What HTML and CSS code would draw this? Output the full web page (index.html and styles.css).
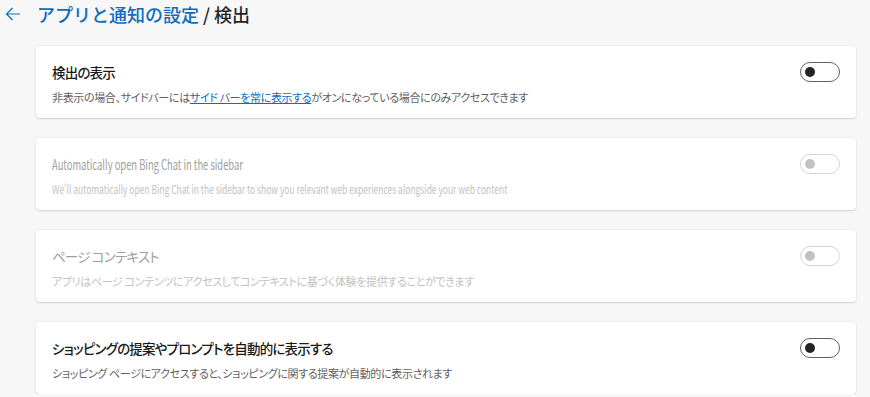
FILE: index.html
```html
<!DOCTYPE html>
<html lang="ja">
<head>
  <meta charset="UTF-8" />
  <title>検出</title>
  <link rel="stylesheet" href="styles.css">
</head>
<body>
  <div class="header">
    <a href="#" class="back" title="戻る">
      <svg width="16" height="16" viewBox="0 0 16 16"><path d="M15 8H1.5M7.5 2L1.5 8l6 6" fill="none" stroke="#0f6cbd" stroke-width="1.2"/></svg>
    </a>
    <h1><a href="#">アプリと通知の設定</a> / 検出</h1>
  </div>

  <div class="settings">
    <div class="card">
      <div class="card-text">
        <h2>検出の表示</h2>
        <p>非表示の場合、サイドバーには<a href="#">サイド バーを常に表示する</a>がオンになっている場合にのみアクセスできます</p>
      </div>
      <span class="toggle"></span>
    </div>

    <div class="card disabled latin">
      <div class="card-text">
        <h2>Automatically open Bing Chat in the sidebar</h2>
        <p>We'll automatically open Bing Chat in the sidebar to show you relevant web experiences alongside your web content</p>
      </div>
      <span class="toggle"></span>
    </div>

    <div class="card disabled">
      <div class="card-text">
        <h2>ページ コンテキスト</h2>
        <p>アプリはページ コンテンツにアクセスしてコンテキストに基づく体験を提供することができます</p>
      </div>
      <span class="toggle"></span>
    </div>

    <div class="card">
      <div class="card-text">
        <h2>ショッピングの提案やプロンプトを自動的に表示する</h2>
        <p>ショッピング ページにアクセスすると、ショッピングに関する提案が自動的に表示されます</p>
      </div>
      <span class="toggle"></span>
    </div>
  </div>
</body>
</html>
```

FILE: styles.css
```css
* {
  box-sizing: border-box;
  margin: 0;
  padding: 0;
}

body {
  font-family: 'Noto Sans CJK JP', 'Noto Sans', sans-serif;
  background-color: #f7f7f7;
  color: #1a1a1a;
  overflow: hidden;
}

.header {
  display: flex;
  align-items: center;
  height: 28px;
  padding-left: 5px;
}

.back {
  display: flex;
  width: 16px;
  margin-right: 16px;
}

h1 {
  font-size: 18px;
  font-weight: 500;
  color: #242424;
  line-height: 28px;
}

h1 a {
  color: #0f6cbd;
  text-decoration: none;
}

.settings {
  display: flex;
  flex-direction: column;
  gap: 20px;
  width: 820px;
  margin: 18px 0 0 36px;
}

.card {
  display: flex;
  justify-content: space-between;
  height: 72px;
  padding: 16px 16px 0;
  background: #fff;
  border-radius: 4px;
  box-shadow: 0 1px 2px rgba(0, 0, 0, 0.14), 0 0 2px rgba(0, 0, 0, 0.08);
  font-feature-settings: "palt";
}

.card-text {
  flex: 1;
}

.card h2 {
  font-size: 13.5px;
  font-weight: 500;
  line-height: 20px;
  letter-spacing: -0.8px;
  color: #1a1a1a;
}

.card p {
  font-size: 11px;
  line-height: 16px;
  margin-top: 7px;
  letter-spacing: -0.35px;
  color: #616161;
}

.card p a {
  color: #0f6cbd;
  text-decoration: underline;
}

.card.latin h2 {
  font-size: 14px;
  letter-spacing: 0;
  transform: scaleX(0.67);
  transform-origin: left center;
}

.card.latin p {
  font-size: 12px;
  letter-spacing: 0;
  transform: scaleX(0.705);
  transform-origin: left center;
}

.toggle {
  position: relative;
  width: 40px;
  height: 20px;
  border: 1px solid #616161;
  border-radius: 10px;
  flex-shrink: 0;
}

.toggle::after {
  content: '';
  position: absolute;
  left: 4px;
  top: 4px;
  width: 10px;
  height: 10px;
  border-radius: 50%;
  background: #242424;
}

.card.disabled h2 {
  font-weight: 400;
  color: #a0a0a0;
}

.card.disabled p {
  color: #c2c2c2;
}

.card.disabled .toggle {
  border-color: #d6d6d6;
}

.card.disabled .toggle::after {
  background: #c2c2c2;
}
```
